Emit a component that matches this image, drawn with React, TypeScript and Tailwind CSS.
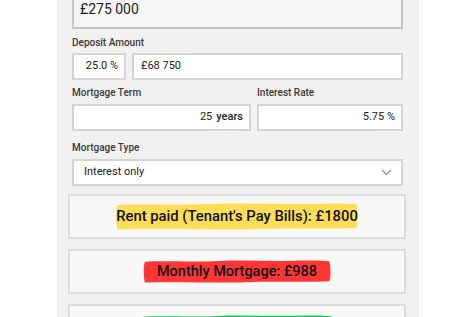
import React from "react";

const font = { fontFamily: "Roboto, 'Liberation Sans', sans-serif" };

function Label({ children, className = "" }: { children: React.ReactNode; className?: string }) {
  return (
    <div className={`h-[14px] leading-[14px] text-[10px] font-medium text-[#3a3a3a] ${className}`}>{children}</div>
  );
}

function Box({ children, className = "" }: { children: React.ReactNode; className?: string }) {
  return (
    <div
      className={`h-[27px] bg-white border-2 border-[#d4d4d4] flex items-center text-[11px] text-[#222] ${className}`}
    >
      {children}
    </div>
  );
}

function Card({ children, className = "" }: { children: React.ReactNode; className?: string }) {
  return (
    <div
      className={`h-[45px] bg-[#f8f8f9] border-2 border-[#dadcdf] flex items-center justify-center ${className}`}
    >
      {children}
    </div>
  );
}

function Brush({ color }: { color: string }) {
  return (
    <svg
      className="absolute inset-0 w-full h-full"
      viewBox="0 0 100 20"
      preserveAspectRatio="none"
    >
      <path
        d="M1,1.5 C12,0.4 25,2 40,0.8 C55,-0.2 70,1.4 85,0.5 C92,0.2 96,0.6 99,1 C99.8,6 99.8,14 99,18.5 C85,19.6 70,18.2 55,19.4 C40,20.2 20,18.8 1,19.6 C0.2,14 0.1,7 1,1.5 Z"
        fill={color}
      />
    </svg>
  );
}

export default function App() {
  return (
    <div className="w-[476px] h-[317px] bg-white overflow-hidden" style={font}>
      <div className="ml-[57px] w-[362px] h-full bg-[#f1f1f1] pl-[15px] pr-[16px] flow-root">
        <div className="mt-[-19px] h-[48px] bg-[#f6f6f6] border-2 border-[#c6c6c6] flex items-end pl-[6px] pb-[10px] text-[14px] text-[#222]">
          <span className="translate-y-[3px]">£275 000</span>
        </div>

        <Label className="mt-[7px]">Deposit Amount</Label>
        <div className="mt-[3px] flex gap-[6px]">
          <Box className="w-[54px] justify-end pr-[6px]">25.0 %</Box>
          <Box className="flex-1 pl-[7px] text-[10.5px]">£68 750</Box>
        </div>

        <div className="mt-[6px] flex gap-[6px]">
          <div className="w-[179px]">
            <Label>Mortgage Term</Label>
            <Box className="mt-[4px] justify-end pr-[6px]">
              <span>25</span>
              <span className="ml-[4px] font-medium">years</span>
            </Box>
          </div>
          <div className="flex-1">
            <Label>Interest Rate</Label>
            <Box className="mt-[4px] justify-end pr-[6px]">5.75 %</Box>
          </div>
        </div>

        <Label className="mt-[10px]">Mortgage Type</Label>
        <Box className="mt-[4px] justify-between pl-[10px] pr-[9px]">
          <span>Interest only</span>
          <svg width="11" height="7" viewBox="0 0 11 7" fill="none">
            <path d="M1 1l4.5 4.5L10 1" stroke="#8a8a8a" strokeWidth="1.2" />
          </svg>
        </Box>

        <div className="ml-[-4px] mr-[-3px]">
          <Card className="mt-[8px]">
            <span className="relative inline-block px-[1px] h-[27px] leading-[27px] text-[14.8px] font-medium text-[#111]">
              <Brush color="#ffdd57" />
              <span className="relative">Rent paid (Tenant's Pay Bills): £1800</span>
            </span>
          </Card>
          <Card className="mt-[10px]">
            <span className="relative inline-block px-[14px] h-[23px] leading-[23px] text-[14.5px] font-medium text-[#111]">
              <Brush color="#ff3636" />
              <span className="relative">Monthly Mortgage: £988</span>
            </span>
          </Card>
          <Card className="mt-[10px] items-start pt-[9px]">
            <span className="relative inline-block w-[192px] h-[22px]">
              <Brush color="#10c95a" />
            </span>
          </Card>
        </div>
      </div>
    </div>
  );
}
